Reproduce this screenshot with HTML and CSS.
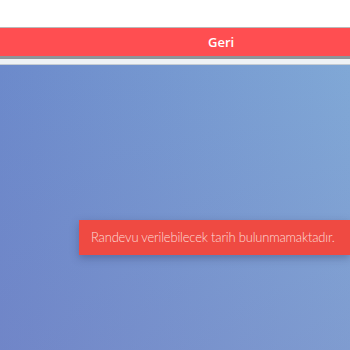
FILE: index.html
```html
<!DOCTYPE html>
<html>

<head>
    <link rel="stylesheet" href="styles.css">
</head>

<body>
    <div class="page">
        <div class="topSpace"></div>
        <div class="backBar">
            <button class="backButton">Geri</button>
        </div>
        <div class="barShade"></div>
        <div class="content"></div>
    </div>

    <div class="toast">Randevu verilebilecek tarih bulunmamaktadır.</div>
</body>

</html>
```

FILE: styles.css
```css
html,
body {
    margin: 0;
    height: 100%;
}

body {
    font-family: Lato, "Open Sans", sans-serif;
    overflow: hidden;
}

.page {
    display: flex;
    flex-direction: column;
    height: 100%;
    background: #fff;
}

.topSpace {
    height: 27px;
}

.backBar {
    border-top: 1px solid #b9b9b9;
    background: #ff4e51;
    height: 28px;
    display: flex;
    align-items: center;
    padding-left: 208px;
}

.backButton {
    border: none;
    background: none;
    padding: 0;
    color: #fff;
    font-family: "Open Sans", sans-serif;
    font-weight: 600;
    font-size: 13px;
}

.barShade {
    height: 5px;
    border-top: 3px solid #8f9599;
    border-bottom: 1px solid #c5ccd2;
    background: #eef2f5;
}

.content {
    flex: 1;
    background:
        linear-gradient(to bottom, rgba(120, 130, 200, 0) 0%, rgba(125, 120, 190, 0.25) 100%),
        linear-gradient(to right, #6c8acb 0%, #80a8d6 100%);
}

.toast {
    position: absolute;
    left: 79px;
    right: 0;
    top: 220px;
    height: 35px;
    box-sizing: border-box;
    padding: 9px 12px;
    background: #ef4a42;
    color: #fcdcd6;
    font-family: Lato, sans-serif;
    font-weight: 300;
    font-size: 13px;
    letter-spacing: -0.2px;
    white-space: nowrap;
    overflow: hidden;
    box-shadow: 0 3px 8px rgba(40, 50, 90, 0.35);
}
```
